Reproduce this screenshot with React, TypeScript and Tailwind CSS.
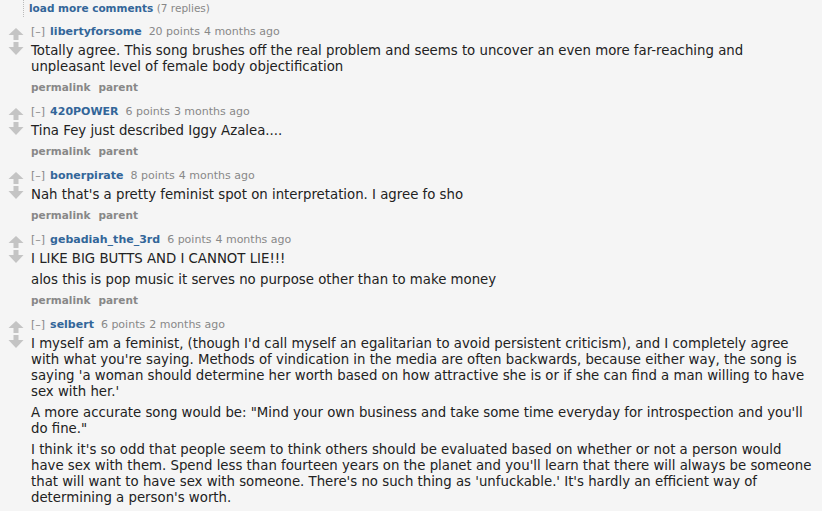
import React from 'react'

type Comment = {
  author: string
  points: string
  age: string
  paras: string[]
}

const COMMENTS: Comment[] = [
  {
    author: 'libertyforsome',
    points: '20 points',
    age: '4 months ago',
    paras: [
      'Totally agree. This song brushes off the real problem and seems to uncover an even more far-reaching and unpleasant level of female body objectification',
    ],
  },
  {
    author: '420POWER',
    points: '6 points',
    age: '3 months ago',
    paras: ['Tina Fey just described Iggy Azalea....'],
  },
  {
    author: 'bonerpirate',
    points: '8 points',
    age: '4 months ago',
    paras: ["Nah that's a pretty feminist spot on interpretation. I agree fo sho"],
  },
  {
    author: 'gebadiah_the_3rd',
    points: '6 points',
    age: '4 months ago',
    paras: [
      'I LIKE BIG BUTTS AND I CANNOT LIE!!!',
      'alos this is pop music it serves no purpose other than to make money',
    ],
  },
  {
    author: 'selbert',
    points: '6 points',
    age: '2 months ago',
    paras: [
      "I myself am a feminist, (though I'd call myself an egalitarian to avoid persistent criticism), and I completely agree with what you're saying. Methods of vindication in the media are often backwards, because either way, the song is saying 'a woman should determine her worth based on how attractive she is or if she can find a man willing to have sex with her.'",
      'A more accurate song would be: "Mind your own business and take some time everyday for introspection and you\'ll do fine."',
      "I think it's so odd that people seem to think others should be evaluated based on whether or not a person would have sex with them. Spend less than fourteen years on the planet and you'll learn that there will always be someone that will want to have sex with someone. There's no such thing as 'unfuckable.' It's hardly an efficient way of determining a person's worth.",
    ],
  },
]

function Arrows() {
  return (
    <div className="flex w-[31px] shrink-0 flex-col items-center pl-[1px] pt-[3px]">
      <svg width="16" height="12" viewBox="0 0 16 12">
        <path d="M8 0 L15.5 7 L10.5 7 L10.5 12 L5.5 12 L5.5 7 L0.5 7 Z" fill="#c4c4c4" />
      </svg>
      <svg width="16" height="13" viewBox="0 0 16 13" className="mt-[2px]">
        <path d="M5.5 0 L10.5 0 L10.5 5 L15.5 5 L8 13 L0.5 5 L5.5 5 Z" fill="#c4c4c4" />
      </svg>
    </div>
  )
}

function CommentRow({ c }: { c: Comment }) {
  return (
    <div className="flex">
      <Arrows />
      <div className="w-[786px] shrink-0">
        <p className="text-[11px] leading-[14px] text-[#888]">
          <span className="mr-[5px]">[–]</span>
          <span className="mr-[7px] font-bold text-[#369]">{c.author}</span>
          <span className="mr-[4px]">{c.points}</span>
          <span>{c.age}</span>
        </p>
        <div className="mt-[4px] space-y-[5px] text-[13.3px] leading-[16px] text-[#222]">
          {c.paras.map((p, i) => (
            <p key={i}>{p}</p>
          ))}
        </div>
        <p className="mt-[5px] flex gap-[8px] text-[10.5px] font-bold leading-[14px] text-[#888]">
          <span>permalink</span>
          <span>parent</span>
        </p>
      </div>
    </div>
  )
}

export default function App() {
  return (
    <div
      className="h-[511px] w-[822px] overflow-hidden bg-[#f5f5f5]"
      style={{ fontFamily: '"DejaVu Sans", Verdana, sans-serif' }}
    >
      <div className="ml-[23px] border-l border-dotted border-[#bbb] pb-[2px] pl-[5px] pt-[1px] text-[10.5px] leading-[14px]">
        <span className="font-bold text-[#369]">load more comments</span>{' '}
        <span className="text-[#888]">(7 replies)</span>
      </div>
      <div className="mt-[8px] flex flex-col gap-[11px]">
        {COMMENTS.map((c) => (
          <CommentRow key={c.author} c={c} />
        ))}
      </div>
    </div>
  )
}
